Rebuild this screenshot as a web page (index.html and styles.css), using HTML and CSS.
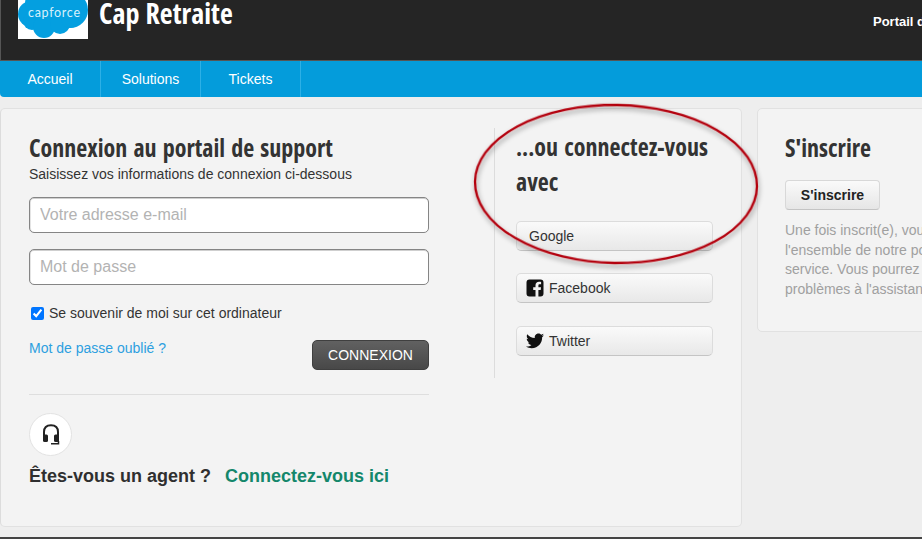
FILE: index.html
```html
<!DOCTYPE html>
<html lang="fr">
<head>
<meta charset="utf-8">
<title>Cap Retraite</title>
<link rel="stylesheet" href="styles.css">
</head>
<body>
<div class="page">
  <header class="topbar">
    <div class="brand">
      <div class="logo">
        <svg width="70" height="39" viewBox="0 0 70 39"><g fill="#049fe0"><circle cx="13" cy="14" r="13"/><circle cx="28" cy="4" r="21"/><circle cx="52" cy="10" r="18"/><circle cx="14" cy="21" r="9"/><circle cx="26" cy="27" r="11"/><circle cx="42" cy="24" r="10"/><circle cx="52" cy="19" r="9"/></g></svg>
        <span class="logo-text">capforce</span>
      </div>
      <h1 class="site-title">Cap Retraite</h1>
    </div>
    <div class="portal">Portail de support</div>
  </header>
  <nav class="nav">
    <a class="nav-item">Accueil</a>
    <a class="nav-item">Solutions</a>
    <a class="nav-item">Tickets</a>
  </nav>
  <main class="content">
    <section class="panel login-panel">
      <div class="login-top">
        <div class="login-col">
          <h2 class="heading">Connexion au portail de support</h2>
          <p class="sub">Saisissez vos informations de connexion ci-dessous</p>
          <input class="field" type="text" placeholder="Votre adresse e-mail">
          <input class="field" type="password" placeholder="Mot de passe">
          <label class="remember"><input class="check" type="checkbox" checked>Se souvenir de moi sur cet ordinateur</label>
          <div class="actions">
            <a class="forgot">Mot de passe oublié ?</a>
            <button class="btn-dark">CONNEXION</button>
          </div>
        </div>
        <div class="social-col">
          <h2 class="heading social-heading">...ou connectez-vous avec</h2>
          <a class="btn-social btn-google">Google</a>
          <a class="btn-social">
            <svg class="ico" width="18" height="18" viewBox="0 0 18 18"><path fill="#111" d="M3.500 0.500 H14.500 A3 3 0 0 1 17.500 3.500 V14.500 A3 3 0 0 1 14.500 17.500 H12.400 V10.900 H14.700 L15 8.200 H12.400 V6.700 C12.400 5.800 12.700 5.300 13.800 5.300 H15.100 V2.900 C14.600 2.800 13.900 2.800 13 2.800 C10.900 2.800 9.500 4 9.500 6.300 V8.200 H7.200 V10.900 H9.500 V17.500 H3.500 A3 3 0 0 1 0.500 14.500 V3.500 A3 3 0 0 1 3.500 0.500 Z"/></svg>
            Facebook
          </a>
          <a class="btn-social">
            <svg class="ico" width="18" height="16" viewBox="0 0 24 20"><path fill="#111" d="M24 2.400 C23.100 2.800 22.200 3.100 21.200 3.200 C22.200 2.600 23 1.600 23.400 0.400 C22.400 1 21.300 1.400 20.200 1.600 C19.300 0.600 18 0 16.600 0 C13.400 0 11.100 3 11.800 6 C7.700 5.800 4.100 3.900 1.700 0.900 C0.400 3.100 1 6 3.200 7.500 C2.400 7.500 1.600 7.200 1 6.900 C0.900 9.200 2.600 11.300 4.900 11.800 C4.200 12 3.400 12 2.700 11.900 C3.300 13.900 5.200 15.300 7.300 15.300 C5.200 16.900 2.600 17.600 0 17.300 C2.200 18.700 4.800 19.500 7.500 19.500 C16.600 19.500 21.800 11.800 21.500 4.900 C22.500 4.200 23.300 3.400 24 2.400 Z"/></svg>
            Twitter
          </a>
        </div>
      </div>
      <div class="agent">
        <div class="agent-icon">
          <svg width="18" height="21" viewBox="0 0 18 21"><path fill="none" stroke="#222" stroke-width="2" d="M2 12 V8 C2 3.500 4.800 1.200 9 1.200 C13.200 1.200 16 3.500 16 8 V12"/><rect x="1" y="10.500" width="5" height="7.500" rx="1.500" fill="#222"/><rect x="12" y="10.500" width="5" height="7.500" rx="1.500" fill="#222"/><path fill="none" stroke="#222" stroke-width="1.500" d="M16.500 17 V19.700 H9"/></svg>
        </div>
        <p class="agent-text">Êtes-vous un agent ? <a class="agent-link">Connectez-vous ici</a></p>
      </div>
    </section>
    <aside class="panel signup-panel">
      <h2 class="heading">S'inscrire</h2>
      <a class="btn-signup">S'inscrire</a>
      <p class="signup-text">Une fois inscrit(e), vous pourrez accéder à l'ensemble de notre portail et de notre service. Vous pourrez aussi soumettre vos problèmes à l'assistance en ligne.</p>
    </aside>
  </main>
  <div class="footer-bar"></div>
  <svg class="circle" width="300" height="180" viewBox="0 0 300 180">
    <defs><filter id="sh" x="-10%" y="-10%" width="120%" height="120%"><feDropShadow dx="1" dy="3" stdDeviation="2.500" flood-color="#000" flood-opacity=".4"/></filter></defs>
    <ellipse cx="146" cy="89" rx="141" ry="79" fill="none" stroke="#b3000f" stroke-width="2.300" filter="url(#sh)" transform="rotate(1 146 89)"/>
  </svg>
</div>
</body>
</html>
```
FILE: styles.css
```css
* { box-sizing: border-box; }
html, body { margin: 0; padding: 0; height: 100%; overflow: hidden; }
body { background: #eeeeee; font-family: "Liberation Sans", Arial, sans-serif; color: #333; }
.page { position: relative; width: 922px; height: 539px; overflow: hidden; }

.topbar { height: 61px; background: #252525; border-left: 1px solid #555; border-bottom: 1px solid #555; display: flex; justify-content: space-between; overflow: hidden; white-space: nowrap; }
.brand { display: flex; align-items: flex-start; padding-left: 17px; gap: 11px; }
.logo { position: relative; width: 70px; height: 39px; background: #fff; overflow: hidden; }
.logo svg { display: block; }
.logo-text { position: absolute; left: 10px; top: 5px; font: 400 12.500px "Lato", sans-serif; letter-spacing: 0.7px; color: #d8f1fc; }
.site-title { margin: 0; color: #fff; font: 700 28px/27px "Open Sans", sans-serif; font-stretch: 75%; word-spacing: 1px; }
.portal { width: 49px; padding-top: 13px; color: #fff; font-size: 13px; font-weight: 700; line-height: 17px; overflow: hidden; }

.nav { height: 36px; background: #049cdb; border-bottom-left-radius: 4px; display: flex; }
.nav-item { width: 100px; border-right: 1px solid #2db0e6; color: #fff; font-size: 14px; line-height: 36px; text-align: center; }
.nav-item:first-child { width: 101px; }

.content { display: flex; align-items: flex-start; gap: 15px; margin-top: 11px; width: 1200px; }
.panel { background: #f3f3f3; border: 1px solid #e1e1e1; border-radius: 5px; }
.login-panel { flex: none; width: 742px; height: 419px; padding: 24px 28px 0; border-left-color: #dcdcdc; }
.login-top { display: flex; align-items: flex-start; }
.login-col { width: 400px; }
.heading { margin: 0; font: 700 24px/30px "Open Sans", sans-serif; font-stretch: 75%; word-spacing: 1.8px; color: #333; }
.sub { margin: 3px 0 0; font-size: 14px; line-height: 17px; color: #333; }
.field { display: block; width: 400px; height: 36px; margin-top: 16px; padding: 0 10px; background: #fff; border: 1px solid #858585; border-radius: 5px; box-shadow: inset 0 1px 0 #cfcfcf, inset 1px 0 0 #e4e4e4; font: 16px "Liberation Sans", sans-serif; color: #333; }
.sub + .field { margin-top: 14px; }
.field::placeholder { color: #b3b3b3; opacity: 1; }
.remember { display: flex; align-items: center; margin-top: 20px; font-size: 14px; line-height: 16px; color: #333; }
.check { width: 13px; height: 13px; margin: 0 5px 0 2px; accent-color: #0075ff; }
.actions { display: flex; justify-content: space-between; align-items: flex-start; margin-top: 18px; }
.forgot { color: #2d9fe0; font-size: 14px; line-height: 16px; margin-top: 1px; }
.btn-dark { width: 117px; height: 30px; margin-top: 1px; padding: 0; border: 1px solid #3f3f3f; border-radius: 5px; background: linear-gradient(#616161, #484848); color: #fff; font: 14px "Liberation Sans", sans-serif; }

.social-col { width: 220px; height: 250px; margin: -5px 0 0 65px; padding-left: 21px; border-left: 1px solid #dcdcdc; }
.social-heading { width: 197px; line-height: 35px; margin: 1px 0 22px; }
.btn-social { display: flex; align-items: center; gap: 5px; width: 197px; height: 30px; margin-bottom: 23px; padding: 0 9px; background: linear-gradient(#fafafa, #e8e8e8); border: 1px solid #dcdcdc; border-bottom-color: #c4c4c4; border-radius: 5px; color: #333; font-size: 14px; }
.btn-google { padding-left: 12px; margin-bottom: 22px; }
.ico { flex: none; }

.agent { width: 400px; margin-top: 16px; border-top: 1px solid #dedede; padding-top: 18px; }
.agent-icon { width: 43px; height: 43px; border-radius: 50%; background: #fff; border: 1px solid #e3e3e3; display: flex; align-items: center; justify-content: center; }
.agent-text { margin: 9px 0 0; font-size: 18px; font-weight: 700; line-height: 22px; color: #2f2f2f; white-space: nowrap; }
.agent-link { color: #14876b; margin-left: 9px; }

.signup-panel { flex: none; width: 400px; height: 224px; padding: 24px 27px; }
.btn-signup { display: block; width: 95px; height: 30px; margin-top: 17px; background: linear-gradient(#fafafa, #e6e6e6); border: 1px solid #d8d8d8; border-bottom-color: #c4c4c4; border-radius: 4px; color: #222; font-size: 14px; font-weight: 700; line-height: 28px; text-align: center; }
.signup-text { margin: 11px 0 0; width: 275px; color: #a0a0a0; font-size: 14px; line-height: 19.500px; }

.footer-bar { height: 2px; margin-top: 10px; background: #444; }
.circle { position: absolute; left: 470px; top: 95px; pointer-events: none; }
```
